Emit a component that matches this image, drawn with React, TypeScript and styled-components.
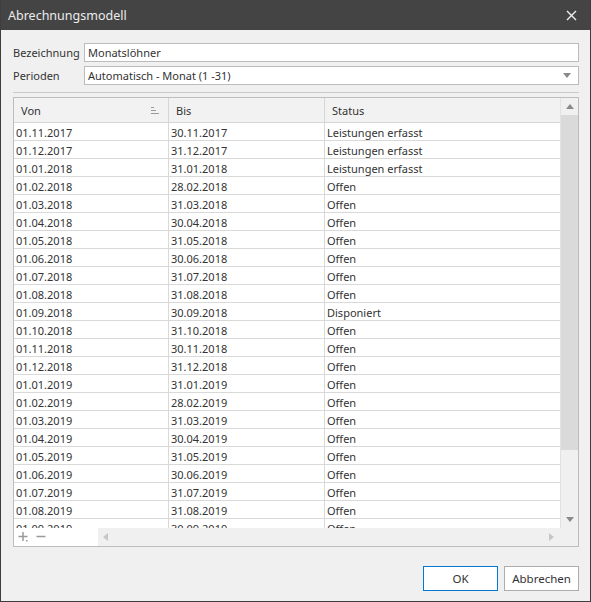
import React from "react";
import styled, { createGlobalStyle } from "styled-components";

const GlobalStyle = createGlobalStyle`
  html, body {
    margin: 0;
    padding: 0;
    background: #f0f0f0;
  }
  body {
    font-family: "Segoe UI", "Noto Sans", sans-serif;
    font-size: 11px;
    color: #333;
  }
  * {
    box-sizing: border-box;
  }
`;

const Window = styled.div`
  width: 591px;
  height: 602px;
  display: flex;
  flex-direction: column;
  background: #f0f0f0;
  border: 1px solid #3e3e3e;
  border-top: none;
`;

const TitleBar = styled.div`
  height: 30px;
  flex: none;
  background: #444444;
  color: #ececec;
  display: flex;
  align-items: center;
  justify-content: space-between;
  padding: 0 12px 0 7px;
  font-size: 12.5px;
`;

const CloseButton = styled.div`
  width: 14px;
  height: 14px;
  display: flex;
  align-items: center;
  justify-content: center;
`;

const Content = styled.div`
  flex: 1;
  min-height: 0;
  display: flex;
  flex-direction: column;
  padding: 13px 11px 10px 12px;
`;

const FieldRow = styled.div<{ $gap?: number }>`
  display: grid;
  grid-template-columns: 71px 1fr;
  align-items: center;
  margin-top: ${(p) => p.$gap ?? 0}px;
`;

const Label = styled.label`
  color: #333;
`;

const Field = styled.div`
  height: 19px;
  border: 1px solid #bcbcbc;
  background: #fff;
  display: flex;
  align-items: center;
  justify-content: space-between;
  padding: 0 7px 0 3px;
  color: #333;
`;

const Separator = styled.div`
  height: 1px;
  background: #c9c9c9;
  margin: 7px 0 4px;
  flex: none;
`;

const Table = styled.div`
  flex: 1;
  min-height: 0;
  display: flex;
  flex-direction: column;
  border: 1px solid #bdbdbd;
  background: #fff;
`;

const Main = styled.div`
  flex: 1;
  min-height: 0;
  display: grid;
  grid-template-columns: 1fr 18px;
`;

const Grid = styled.div`
  display: flex;
  flex-direction: column;
  min-height: 0;
  overflow: hidden;
`;

const Columns = "155px 156px 1fr";

const HeaderRow = styled.div`
  display: grid;
  grid-template-columns: ${Columns};
  height: 25px;
  flex: none;
  background: #f2f2f2;
  border-bottom: 1px solid #d6d6d6;
`;

const HeaderCell = styled.div`
  display: flex;
  align-items: center;
  justify-content: space-between;
  padding: 0 9px 0 7px;
  border-right: 1px solid #d6d6d6;
  &:last-child {
    border-right: none;
  }
`;

const Body = styled.div`
  flex: 1;
  min-height: 0;
  overflow: hidden;
`;

const Row = styled.div`
  display: grid;
  grid-template-columns: ${Columns};
  height: 18px;
  border-bottom: 1px solid #d9d9d9;
`;

const Cell = styled.div`
  display: flex;
  align-items: center;
  padding: 1px 2px 0 2px;
  border-right: 1px solid #d9d9d9;
  white-space: nowrap;
  overflow: hidden;
  &:last-child {
    border-right: none;
  }
`;

const VScroll = styled.div`
  display: flex;
  flex-direction: column;
  background: #f0f0f0;
  border-left: 1px solid #e2e2e2;
`;

const ArrowBox = styled.div`
  height: 17px;
  flex: none;
  display: flex;
  align-items: center;
  justify-content: center;
`;

const Thumb = styled.div`
  height: 335px;
  flex: none;
  background: #dadada;
`;

const Track = styled.div`
  flex: 1;
`;

const Footer = styled.div`
  height: 18px;
  flex: none;
  display: flex;
`;

const Tools = styled.div`
  width: 84px;
  flex: none;
  display: flex;
  align-items: center;
  gap: 8px;
  padding-left: 4px;
  background: #fff;
`;

const HScroll = styled.div`
  flex: 1;
  display: flex;
  align-items: center;
  justify-content: space-between;
  background: #f0f0f0;
  padding: 0 24px 0 5px;
`;

const Buttons = styled.div`
  display: flex;
  justify-content: flex-end;
  gap: 6px;
  margin-top: 19px;
  flex: none;
`;

const Button = styled.button<{ $primary?: boolean }>`
  width: 75px;
  height: 25px;
  background: #fff;
  border: 1px solid ${(p) => (p.$primary ? "#0078d7" : "#adadad")};
  font-family: inherit;
  font-size: 11.5px;
  color: #333;
  padding: 0;
`;

const Tri = ({ dir, color }: { dir: "up" | "down" | "left" | "right"; color: string }) => {
  const pts = {
    up: "0,5 4,0 8,5",
    down: "0,0 8,0 4,5",
    left: "5,0 5,8 0,4",
    right: "0,0 0,8 5,4",
  }[dir];
  const horiz = dir === "left" || dir === "right";
  return (
    <svg width={horiz ? 5 : 8} height={horiz ? 8 : 5} viewBox={horiz ? "0 0 5 8" : "0 0 8 5"}>
      <polygon points={pts} fill={color} />
    </svg>
  );
};

const SortIcon = () => (
  <svg width="8" height="7" viewBox="0 0 8 7">
    <rect x="0" y="0" width="3" height="1" fill="#9a9a9a" />
    <rect x="0" y="3" width="5" height="1" fill="#9a9a9a" />
    <rect x="0" y="6" width="8" height="1" fill="#9a9a9a" />
  </svg>
);

const rows: [string, string, string][] = [
  ["01.11.2017", "30.11.2017", "Leistungen erfasst"],
  ["01.12.2017", "31.12.2017", "Leistungen erfasst"],
  ["01.01.2018", "31.01.2018", "Leistungen erfasst"],
  ["01.02.2018", "28.02.2018", "Offen"],
  ["01.03.2018", "31.03.2018", "Offen"],
  ["01.04.2018", "30.04.2018", "Offen"],
  ["01.05.2018", "31.05.2018", "Offen"],
  ["01.06.2018", "30.06.2018", "Offen"],
  ["01.07.2018", "31.07.2018", "Offen"],
  ["01.08.2018", "31.08.2018", "Offen"],
  ["01.09.2018", "30.09.2018", "Disponiert"],
  ["01.10.2018", "31.10.2018", "Offen"],
  ["01.11.2018", "30.11.2018", "Offen"],
  ["01.12.2018", "31.12.2018", "Offen"],
  ["01.01.2019", "31.01.2019", "Offen"],
  ["01.02.2019", "28.02.2019", "Offen"],
  ["01.03.2019", "31.03.2019", "Offen"],
  ["01.04.2019", "30.04.2019", "Offen"],
  ["01.05.2019", "31.05.2019", "Offen"],
  ["01.06.2019", "30.06.2019", "Offen"],
  ["01.07.2019", "31.07.2019", "Offen"],
  ["01.08.2019", "31.08.2019", "Offen"],
  ["01.09.2019", "30.09.2019", "Offen"],
  ["01.10.2019", "31.10.2019", "Offen"],
];

export default function App() {
  return (
    <>
      <GlobalStyle />
      <Window>
        <TitleBar>
          <span>Abrechnungsmodell</span>
          <CloseButton>
            <svg width="11" height="11" viewBox="0 0 11 11">
              <path d="M1 1 L10 10 M10 1 L1 10" stroke="#f0f0f0" strokeWidth="1.4" />
            </svg>
          </CloseButton>
        </TitleBar>
        <Content>
          <FieldRow>
            <Label>Bezeichnung</Label>
            <Field>Monatslöhner</Field>
          </FieldRow>
          <FieldRow $gap={4}>
            <Label>Perioden</Label>
            <Field>
              <span>Automatisch - Monat (1 -31)</span>
              <Tri dir="down" color="#8a8a8a" />
            </Field>
          </FieldRow>
          <Separator />
          <Table>
            <Main>
              <Grid>
                <HeaderRow>
                  <HeaderCell>
                    Von
                    <SortIcon />
                  </HeaderCell>
                  <HeaderCell>Bis</HeaderCell>
                  <HeaderCell>Status</HeaderCell>
                </HeaderRow>
                <Body>
                  {rows.map((r) => (
                    <Row key={r[0]}>
                      <Cell>{r[0]}</Cell>
                      <Cell>{r[1]}</Cell>
                      <Cell>{r[2]}</Cell>
                    </Row>
                  ))}
                </Body>
              </Grid>
              <VScroll>
                <ArrowBox>
                  <Tri dir="up" color="#8a8a8a" />
                </ArrowBox>
                <Thumb />
                <Track />
                <ArrowBox>
                  <Tri dir="down" color="#8a8a8a" />
                </ArrowBox>
              </VScroll>
            </Main>
            <Footer>
              <Tools>
                <svg width="10" height="10" viewBox="0 0 10 10">
                  <path d="M5 0 V9 M0.5 4.5 H9.5" stroke="#9a9a9a" strokeWidth="1.5" />
                  <rect x="8" y="8" width="1.5" height="1.5" fill="#9a9a9a" />
                </svg>
                <svg width="10" height="10" viewBox="0 0 10 10">
                  <path d="M0.5 4.5 H9.5" stroke="#9a9a9a" strokeWidth="1.5" />
                </svg>
              </Tools>
              <HScroll>
                <Tri dir="left" color="#c6c6c6" />
                <Tri dir="right" color="#c6c6c6" />
              </HScroll>
            </Footer>
          </Table>
          <Buttons>
            <Button $primary>OK</Button>
            <Button>Abbrechen</Button>
          </Buttons>
        </Content>
      </Window>
    </>
  );
}
